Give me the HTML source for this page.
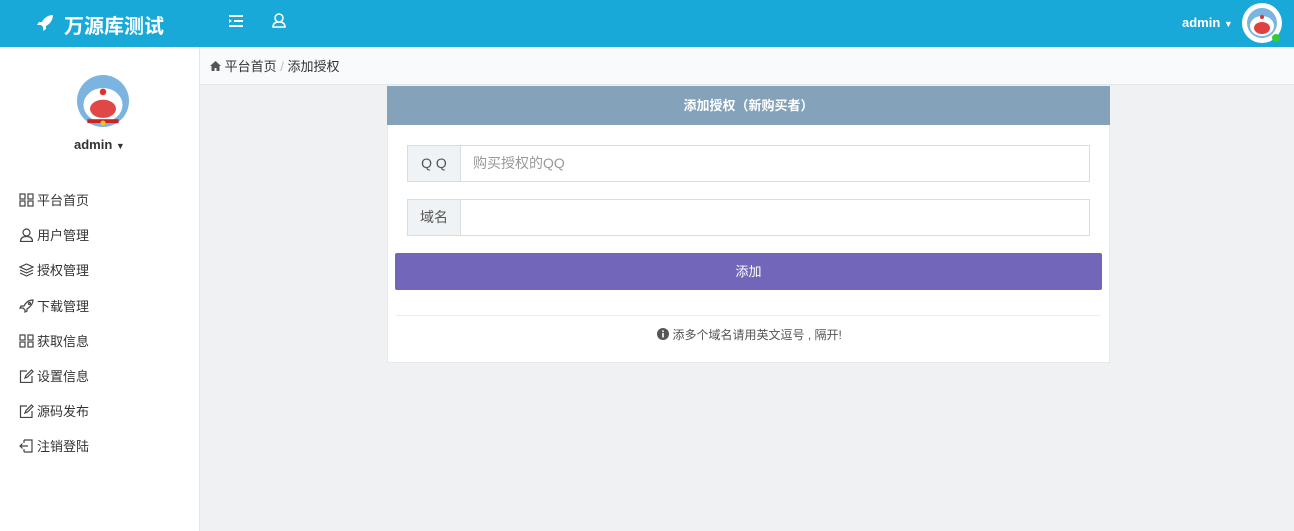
<!DOCTYPE html>
<html><head><meta charset="utf-8"><style>
*{box-sizing:border-box;margin:0;padding:0}
body{width:1294px;height:531px;overflow:hidden;background:#f0f1f3;font-family:"Liberation Sans","Noto Sans CJK SC",sans-serif;font-size:13px;color:#333;position:relative}
.top{position:absolute;left:0;top:0;width:1294px;height:47px;background:#19a9d8;color:#fff}
.brand{position:absolute;top:10px;font-size:20px;font-weight:bold}
.side{position:absolute;left:0;top:47px;width:200px;height:484px;background:#fff;border-right:1px solid #e3e5e8}
.bc{position:absolute;left:200px;top:47px;width:1094px;height:38px;background:#f9fafb;border-bottom:1px solid #e3e5e8;font-size:13px;color:#333;padding:9px 0 0 10px}
.menu div{position:absolute;left:19px;font-size:13px;color:#333;display:flex;align-items:center;gap:3px}
.menu svg{fill:none;stroke:#444;stroke-width:1.2}
.card{position:absolute;left:387px;top:86px;width:723px;height:277px;background:#fff;border:1px solid #e6e8eb;border-top:none}
.ch{height:39px;margin:0 -1px;background:#84a3ba;color:#fff;font-weight:bold;text-align:center;line-height:39px;font-size:13px}
.ig{position:absolute;left:19px;width:683px;height:37px;border:1px solid #d9dde1;display:flex}
.ig .a{width:53px;background:#f0f3f5;border-right:1px solid #d9dde1;text-align:center;line-height:35px;font-size:14px;color:#555}
.ig .p{padding-left:12px;line-height:35px;font-size:14px;color:#999}
.btn{position:absolute;left:7px;top:167px;width:707px;height:37px;background:#7266ba;color:#fff;text-align:center;line-height:37px;font-size:13px;border-radius:2px}
</style></head><body>
<div class="top">
<svg style="position:absolute;left:36px;top:14px" width="18" height="18" viewBox="0 0 18 18"><path d="M17 1C12 1 8 4 6 8L3 8 1 11 5 11 7 13 7 17 10 15 10 12C14 10 17 6 17 1Z" fill="#fff"/></svg>
<div class="brand" style="left:64px">万源库测试</div>
<svg style="position:absolute;left:229px;top:15px" width="14" height="12" viewBox="0 0 14 12"><rect x="0" y="0" width="14" height="2" fill="#fff"/><rect x="5" y="5" width="9" height="2" fill="#fff"/><rect x="0" y="10" width="14" height="2" fill="#fff"/><path d="M0 4L3 6 0 8Z" fill="#fff"/></svg>
<svg style="position:absolute;left:272px;top:13px" width="14" height="15" viewBox="0 0 14 15"><circle cx="7" cy="5" r="4" fill="none" stroke="#fff" stroke-width="1.5"/><path d="M1 14C1 10 4 9 7 9S13 10 13 14Z" fill="none" stroke="#fff" stroke-width="1.5"/></svg>
<div style="position:absolute;left:1182px;top:15px;font-size:13px;font-weight:bold">admin <span style="font-size:9px">▼</span></div>
<svg style="position:absolute;left:1242px;top:3px" width="40" height="40" viewBox="0 0 40 40"><circle cx="20" cy="20" r="20" fill="#fff"/><circle cx="20" cy="20" r="15" fill="#7bb4e0"/><ellipse cx="20" cy="23" rx="12" ry="10" fill="#fff"/><ellipse cx="20" cy="25" rx="8" ry="6" fill="#e04040"/><circle cx="20" cy="14" r="2" fill="#e03030"/><circle cx="34" cy="35" r="4" fill="#3c3"/></svg>
</div>
<div class="side">
<svg style="position:absolute;left:77px;top:28px" width="52" height="52" viewBox="0 0 40 40"><circle cx="20" cy="20" r="20" fill="#7bb4e0"/><ellipse cx="20" cy="23" rx="15" ry="13" fill="#fff"/><ellipse cx="20" cy="26" rx="10" ry="7" fill="#e04848"/><circle cx="20" cy="13" r="2.5" fill="#e03030"/><rect x="8" y="34" width="24" height="3" fill="#c22"/><circle cx="20" cy="37" r="2" fill="#f4c020"/></svg>
<div style="position:absolute;left:74px;top:90px;font-weight:bold;font-size:13px">admin <span style="font-size:9px">▼</span></div>
<div class="menu">
<div style="top:143px"><svg width="15" height="14"><rect x="1" y="1" width="5" height="5"/><rect x="9" y="1" width="5" height="5"/><rect x="1" y="8" width="5" height="5"/><rect x="9" y="8" width="5" height="5"/></svg>平台首页</div>
<div style="top:178px"><svg width="15" height="14"><circle cx="7.5" cy="4.5" r="3.5"/><path d="M1.5 13.5C1.5 9.5 4 8.5 7.5 8.5S13.5 9.5 13.5 13.5Z"/></svg>用户管理</div>
<div style="top:213px"><svg width="15" height="14"><path d="M7.5 1L14 4 7.5 7 1 4Z M1 7L7.5 10 14 7 M1 10L7.5 13 14 10"/></svg>授权管理</div>
<div style="top:249px"><svg width="15" height="14"><path d="M14 1C10 1 7 3 5 7L2 7 1 9 4 9 6 11 6 13 8 12 8 10C11 8 14 5 14 1Z"/><circle cx="10.5" cy="4.5" r="1"/></svg>下载管理</div>
<div style="top:284px"><svg width="15" height="14"><rect x="1" y="1" width="5" height="5"/><rect x="9" y="1" width="5" height="5"/><rect x="1" y="8" width="5" height="5"/><rect x="9" y="8" width="5" height="5"/></svg>获取信息</div>
<div style="top:319px"><svg width="15" height="14"><path d="M8 2H1.5V13.5H13V7"/><path d="M6 9L7 6.5 12.5 1 14 2.5 8.5 8Z"/></svg>设置信息</div>
<div style="top:354px"><svg width="15" height="14"><path d="M8 2H1.5V13.5H13V7"/><path d="M6 9L7 6.5 12.5 1 14 2.5 8.5 8Z"/></svg>源码发布</div>
<div style="top:389px"><svg width="15" height="14"><path d="M5 1H13V13H5 M5 4V1 M5 10V13 M9 7H1 M3.5 4.5L1 7 3.5 9.5"/></svg>注销登陆</div>
</div>
</div>
<div class="bc"><svg width="11" height="10" viewBox="0 0 11 10"><path d="M5.5 0L0 5H1.5V10H4.5V7H6.5V10H9.5V5H11Z" fill="#555"/></svg> 平台首页 <span style="color:#bbb">/</span> 添加授权</div>
<div class="card">
<div class="ch">添加授权（新购买者）</div>
<div class="ig" style="top:59px"><div class="a">Q Q</div><div class="p">购买授权的QQ</div></div>
<div class="ig" style="top:113px"><div class="a">域名</div><div class="p"></div></div>
<div class="btn">添加</div>
<div style="position:absolute;left:8px;top:229px;width:705px;border-top:1px solid #eceef0"></div>
<div style="position:absolute;left:0;top:240px;width:723px;text-align:center;font-size:12px;color:#555"><svg width="12" height="12" style="vertical-align:-1px"><circle cx="6" cy="6" r="6" fill="#555"/><rect x="5.2" y="5" width="1.6" height="4.5" fill="#fff"/><circle cx="6" cy="3.2" r="0.9" fill="#fff"/></svg> 添多个域名请用英文逗号 , 隔开!</div>
</div>
</body></html>
